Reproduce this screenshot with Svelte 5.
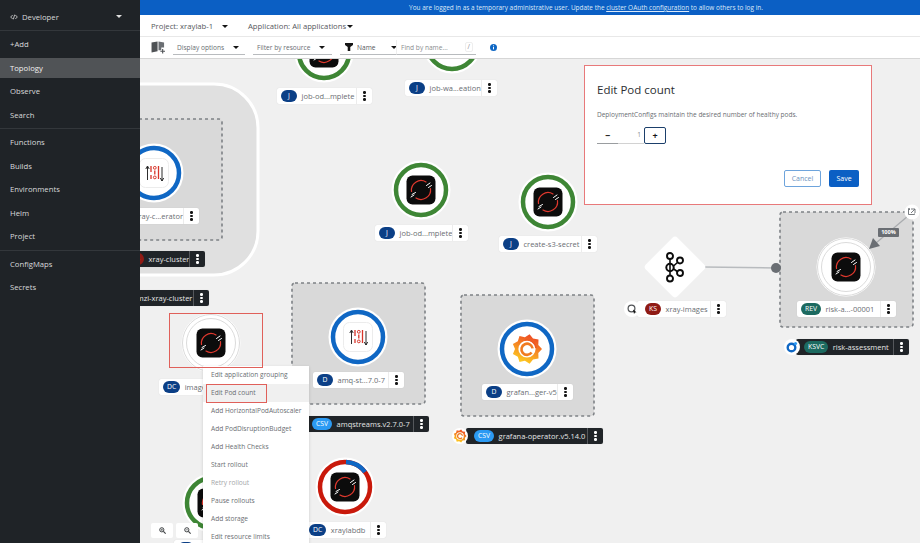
<script>
  const navTop = ['Observe', 'Search'];
  const navMid = ['Functions', 'Builds', 'Environments', 'Helm', 'Project'];
  const navEnd = ['ConfigMaps', 'Secrets'];

  const menu = [
    'Edit application grouping', 'Edit Pod count', 'Add HorizontalPodAutoscaler', 'Add PodDisruptionBudget',
    'Add Health Checks', 'Start rollout', 'Retry rollout', 'Pause rollouts', 'Add storage', 'Edit resource limits'
  ];

  const groups = [
    { x: 100, y: 119, w: 122, h: 121 },
    { x: 292, y: 283, w: 133, h: 121 },
    { x: 461, y: 295, w: 133, h: 121 },
    { x: 780, y: 212, w: 133, h: 115 }
  ];

  const GREEN = '#3e8635';
  const BLUE = '#0f67c4';

  const nodes = [
    { x: 324, y: 53, ring: GREEN, icon: 'rh' },
    { x: 452, y: 44, ring: GREEN, icon: 'grey' },
    { x: 421, y: 190, ring: GREEN, icon: 'rh' },
    { x: 548, y: 202, ring: GREEN, icon: 'rh' },
    { x: 154, y: 173, ring: BLUE, icon: 'strimzi' },
    { x: 211, y: 343, ring: '', icon: 'rh' },
    { x: 358, y: 337, ring: BLUE, icon: 'strimzi' },
    { x: 527, y: 349, ring: BLUE, icon: 'grafana' },
    { x: 212, y: 503, ring: GREEN, icon: 'rh' },
    { x: 345, y: 487, ring: '#c9190b', icon: 'rh', part: true },
    { x: 846, y: 267, ring: '', icon: 'rh' }
  ];

  const DARKBLUE = '#0b3f86';
  const labels = [
    { x: 277, y: 96, w: 95, badge: 'J', color: DARKBLUE, name: 'job-od...mplete' },
    { x: 405, y: 88, w: 92, badge: 'J', color: DARKBLUE, name: 'job-wa...eation' },
    { x: 375, y: 233, w: 93, badge: 'J', color: DARKBLUE, name: 'job-od...mplete' },
    { x: 499, y: 244, w: 98, badge: 'J', color: DARKBLUE, name: 'create-s3-secret' },
    { x: 110, y: 216, w: 89, badge: 'D', color: DARKBLUE, name: 'xray-c...erator' },
    { x: 120, y: 259, w: 85, badge: 'KS', color: '#8f1a14', name: 'xray-cluster', dark: true },
    { x: 97, y: 298, w: 112, badge: 'KS', color: '#8f1a14', name: 'strimzi-xray-cluster', dark: true },
    { x: 159, y: 387, w: 95, badge: 'DC', color: DARKBLUE, name: 'image' },
    { x: 174, y: 548, w: 90, badge: 'J', color: DARKBLUE, name: 'job' },
    { x: 313, y: 380, w: 91, badge: 'D', color: DARKBLUE, name: 'amq-st...7.0-7' },
    { x: 304, y: 424, w: 125, badge: 'CSV', color: '#2b9af3', name: 'amqstreams.v2.7.0-7', dark: true },
    { x: 482, y: 392, w: 91, badge: 'D', color: DARKBLUE, name: 'grafan...ger-v5' },
    { x: 466, y: 436, w: 137, badge: 'CSV', color: '#2b9af3', name: 'grafana-operator.v5.14.0', dark: true },
    { x: 305, y: 530, w: 81, badge: 'DC', color: DARKBLUE, name: 'xraylabdb' },
    { x: 637, y: 309, w: 89, badge: 'KS', color: '#8f1a14', name: 'xray-images', iconed: true },
    { x: 797, y: 309, w: 99, badge: 'REV', color: '#1c6a60', name: 'risk-a...-00001' },
    { x: 796, y: 347, w: 113, badge: 'KSVC', color: '#1c6a60', name: 'risk-assessment', dark: true }
  ];

  // page coordinates -> canvas coordinates
  const CANVAS_X = 140;
  const CANVAS_Y = 59;

  function gear() {
    const pts = [];
    for (let i = 0; i < 18; i++) {
      const a = (i / 18) * Math.PI * 2;
      const r = i % 2 ? 12 : 15;
      pts.push((Math.cos(a) * r).toFixed(1) + ',' + (Math.sin(a) * r).toFixed(1));
    }
    return pts.join(' ');
  }
  const gearPoints = gear();
</script>

<div class="page">
  <aside class="nav">
    <div class="perspective">
      <span class="perspective-name">
        <svg viewBox="0 0 12 8" width="8" height="6"><path d="M4 1 1 4l3 3M8 1l3 3-3 3M7 0.5 5 7.5" fill="none" stroke="#d2d2d2" stroke-width="1.3" /></svg>
        Developer
      </span>
      <span class="caret light"></span>
    </div>
    <div class="nav-section">
      <a class="nav-item" href="#add">+Add</a>
      <a class="nav-item active" href="#topology">Topology</a>
      {#each navTop as item}
        <a class="nav-item" href="#{item}">{item}</a>
      {/each}
    </div>
    <div class="nav-section">
      {#each navMid as item}
        <a class="nav-item" href="#{item}">{item}</a>
      {/each}
    </div>
    <div class="nav-section last">
      {#each navEnd as item}
        <a class="nav-item" href="#{item}">{item}</a>
      {/each}
    </div>
  </aside>

  <main class="main">
    <div class="banner">
      You are logged in as a temporary administrative user. Update the <u>cluster OAuth configuration</u> to allow others to log in.
    </div>

    <div class="project-bar">
      <span class="project">Project: xraylab-1<span class="caret"></span></span>
      <span class="application">Application: All applications<span class="caret tight"></span></span>
    </div>

    <div class="toolbar">
      <svg class="book" viewBox="0 0 16 14" width="15" height="13">
        <path d="M0.5 1.5 7 0.5V11L0.5 12.5Z" fill="#4f5255" />
        <path d="M8 0.5 14 1.5V7H11V10H8Z" fill="#6a6e73" />
        <path d="M12.5 8.5v5M10 11h5" stroke="#4f5255" stroke-width="1.2" />
      </svg>
      <div class="select display">Display options<span class="caret"></span></div>
      <div class="select resource">Filter by resource<span class="caret"></span></div>
      <div class="search-group">
        <div class="select name">
          <svg class="funnel" viewBox="0 0 10 10" width="8" height="8"><path d="M0 0h10v2.4L6.6 5v5H3.4V5L0 2.4Z" fill="#151515" /></svg>
          <span class="name-text">Name</span><span class="caret"></span>
        </div>
        <div class="find">Find by name...<span class="slash">/</span></div>
      </div>
      <svg class="info" viewBox="0 0 10 10" width="7" height="7">
        <circle cx="5" cy="5" r="5" fill="#0f67c4" />
        <path d="M5 4.3v3.4M5 2v1.3" stroke="#fff" stroke-width="1.4" />
      </svg>
    </div>

    <div class="canvas">
      <svg class="graph" viewBox="140 59 780 484" width="780" height="484">
        <defs>
          <linearGradient id="graf" x1="0.2" y1="1" x2="0.6" y2="0">
            <stop offset="0.1" stop-color="#fdc921" />
            <stop offset="0.95" stop-color="#ee4f24" />
          </linearGradient>
        </defs>

        <rect x="60" y="84" width="198" height="191" rx="44" fill="#e0e0e0" stroke="#fff" stroke-width="3" />

        {#each groups as g}
          <rect x={g.x} y={g.y} width={g.w} height={g.h} rx="3" fill="#d9d9d9" stroke="#7d8185" stroke-width="1.6" stroke-dasharray="3 3" />
        {/each}

        <line x1="704" y1="267" x2="776" y2="268" stroke="#b8bbbe" stroke-width="1.5" />
        <circle cx="776" cy="268" r="5" fill="#6a6e73" />
        <line x1="908" y1="216" x2="876" y2="243" stroke="#a9acaf" stroke-width="1.2" />
        <path d="M869 249 873 238 880 246Z" fill="#6a6e73" />

        <g transform="translate(675 267)">
          <rect x="-22.5" y="-22.5" width="45" height="45" rx="4" fill="#fff" transform="rotate(45)" />
          <g fill="none" stroke="#0c0c0c">
            <path d="M-5 -8V8M-2 -0.5 3 -5M-2 1.5 3 5" stroke-width="1.6" />
            <circle cx="-5" cy="-11" r="3" stroke-width="1.9" />
            <circle cx="-5" cy="0.5" r="3.7" stroke-width="2" />
            <circle cx="-5" cy="11.5" r="3" stroke-width="1.9" />
            <circle cx="5" cy="-6.5" r="3" stroke-width="1.9" />
            <circle cx="5" cy="6" r="3" stroke-width="1.9" />
          </g>
        </g>

        {#each nodes as n}
          <g transform="translate({n.x} {n.y})">
            <circle r="29.5" fill="#fff" />
            {#if n.part}
              <circle r="25" fill="none" stroke="#c9190b" stroke-width="4.5" />
              <path d="M1 -25 A25 25 0 0 1 20 -15" fill="none" stroke={BLUE} stroke-width="4.5" />
            {:else if n.ring}
              <circle r="25" fill="none" stroke={n.ring} stroke-width="4.5" />
            {:else}
              <circle r="28.5" fill="none" stroke="#d2d2d2" stroke-width="0.8" />
              <circle r="24.5" fill="none" stroke="#d2d2d2" stroke-width="0.8" />
            {/if}

            {#if n.icon === 'rh'}
              <rect x="-14.5" y="-14.5" width="29" height="29" rx="6" fill="#0c0c0c" />
              <g fill="none" stroke-linecap="round">
                <path d="M-9.5 1.5A9.6 9.6 0 0 1 5 -8M9.5 -1.5A9.6 9.6 0 0 1 -5 8" stroke="#e0392e" stroke-width="1.2" />
                <path d="M5.5 -4.5 9 -7M7.5 -2.5 10.5 -4.5M-9 4.5 -5.5 2.5M-10 7-7 5" stroke="#fff" stroke-width="1" />
              </g>
            {:else if n.icon === 'grey'}
              <rect x="-14.5" y="-14.5" width="29" height="29" rx="6" fill="#6a6e73" />
            {:else if n.icon === 'strimzi'}
              <rect x="-14.5" y="-14.5" width="29" height="29" rx="6" fill="#fff" stroke="#ececec" />
              <path d="M-6.5 -6V7M-8.2 -4 -6.5 -7 -4.8 -4" fill="none" stroke="#151515" stroke-width="0.9" />
              <path d="M8 -6V8M6.3 5 8 8 9.7 5" fill="none" stroke="#151515" stroke-width="0.9" />
              <g fill="none" stroke="#d8352a" stroke-width="1.3">
                <path d="M-3 -7V-1M-3 2V6M0.8 -2.5V1.5M4.5 -7V6" />
                <circle cx="0.8" cy="-5.2" r="1.4" stroke-width="1" />
                <circle cx="0.8" cy="4.4" r="1.4" stroke-width="1" />
              </g>
            {:else if n.icon === 'grafana'}
              <polygon points={gearPoints} fill="url(#graf)" />
              <circle r="8.6" fill="#fff" />
              <path d="M4.6 3.6A5.6 5.6 0 1 1 5.6 -0.6" fill="none" stroke="#f07a20" stroke-width="2.6" />
              <path d="M-2 -9A9 9 0 0 1 9 -1" fill="none" stroke="#ee5a24" stroke-width="1.6" />
            {/if}
          </g>
        {/each}

        <!-- hover badge on the knative revision -->
        <circle cx="912" cy="212" r="7.5" fill="#fff" />
        <path d="M909.5 210v-1.5h-1v6h6v-1M911 209h4v4M915 209l-4 4" fill="none" stroke="#6a6e73" stroke-width="0.9" />
      </svg>

      <span class="traffic">100%</span>

      {#each labels as l}
        <div class="label" class:dark={l.dark} class:iconed={l.iconed} style="left: {l.x - CANVAS_X}px; top: {l.y - CANVAS_Y - 8}px; width: {l.w}px">
          <span class="badge" style="background: {l.color}">{l.badge}</span>
          <span class="label-name">{l.name}</span>
          <span class="kebab"><i></i><i></i><i></i></span>
        </div>
      {/each}

      <span class="app-icon" style="left: 484px; top: 242px">
        <svg viewBox="0 0 16 16" width="16" height="16">
          <circle cx="7.5" cy="7.5" r="3.4" fill="none" stroke="#4f5255" stroke-width="1.2" />
          <path d="M9 8.5l1 4.5 1-1.5 1.5-.2Z" fill="#151515" />
        </svg>
      </span>
      <span class="app-icon" style="left: 644px; top: 280px">
        <svg viewBox="0 0 16 16" width="16" height="16">
          <circle cx="7.5" cy="8.5" r="3.8" fill="none" stroke="#0f67c4" stroke-width="2.4" />
          <circle cx="11.5" cy="4.5" r="1.6" fill="#2b9af3" />
        </svg>
      </span>
      <span class="app-icon" style="left: 312px; top: 369px">
        <svg viewBox="-16 -16 32 32" width="14" height="14">
          <polygon points={gearPoints} fill="url(#graf)" />
          <circle r="8.6" fill="#fff" />
          <path d="M4.6 3.6A5.6 5.6 0 1 1 5.6 -0.6" fill="none" stroke="#f07a20" stroke-width="3" />
        </svg>
      </span>

      <div class="zoom-controls">
        {#each [0, 1] as z}
          <span class="zoom-btn">
            <svg viewBox="0 0 10 10" width="7" height="7">
              <circle cx="4" cy="4" r="3" fill="none" stroke="#3c3f42" stroke-width="1.4" />
              <path d="M6.3 6.3 9.5 9.5" stroke="#3c3f42" stroke-width="1.6" />
              <path d={z ? 'M2.5 4h3' : 'M2.5 4h3M4 2.5v3'} stroke="#3c3f42" stroke-width="0.9" />
            </svg>
          </span>
        {/each}
      </div>

      <span class="mark node-mark"></span>

      <ul class="menu">
        {#each menu as item, i}
          <li class:selected={i === 1} class:disabled={i === 6}>{item}</li>
        {/each}
      </ul>
      <span class="mark menu-mark"></span>

      <section class="dialog">
        <h2>Edit Pod count</h2>
        <p>DeploymentConfigs maintain the desired number of healthy pods.</p>
        <div class="stepper">
          <button type="button" class="step">−</button>
          <span class="count">1</span>
          <button type="button" class="step plus">+</button>
        </div>
        <div class="actions">
          <button type="button" class="cancel">Cancel</button>
          <button type="button" class="save">Save</button>
        </div>
      </section>
    </div>
  </main>
</div>

<style>
  :global(body) {
    background: #fff;
    font-family: "Open Sans", "Noto Sans", sans-serif;
  }

  .page {
    display: flex;
    width: 920px;
    height: 543px;
    overflow: hidden;
    color: #3c3f42;
  }

  .nav {
    flex: none;
    width: 140px;
    background: #1f2327;
    color: #d9dadb;
    font-size: 7.7px;
  }
  .perspective {
    display: flex;
    align-items: center;
    justify-content: space-between;
    height: 31px;
    padding: 3px 18px 0 10px;
    box-sizing: border-box;
    border-bottom: 1px solid #33373b;
  }
  .perspective-name {
    display: flex;
    align-items: center;
    gap: 4px;
  }
  .nav-section {
    display: flex;
    flex-direction: column;
    padding: 1.5px 0;
    border-bottom: 1px solid #33373b;
  }
  .nav-section.last {
    border-bottom: none;
  }
  .nav-item {
    display: flex;
    align-items: center;
    height: 23.5px;
    padding-left: 10px;
    color: inherit;
    text-decoration: none;
  }
  .nav-item.active {
    height: 20px;
    margin: 2px 0 1.5px;
    background: #505356;
    color: #f0f0f0;
  }

  .main {
    flex: 1;
    min-width: 0;
    display: flex;
    flex-direction: column;
  }
  .banner {
    flex: none;
    height: 15px;
    padding-left: 112px;
    background: #0b5fc4;
    color: #dce9f8;
    font-size: 6.45px;
    line-height: 15px;
    text-align: center;
    white-space: nowrap;
  }
  .project-bar {
    flex: none;
    display: flex;
    align-items: center;
    height: 21px;
    padding-left: 11px;
    font-size: 7.7px;
    color: #55585c;
    border-bottom: 1px solid #e8e8e8;
  }
  .project {
    width: 97px;
  }
  .application {
    white-space: nowrap;
  }

  .caret {
    display: inline-block;
    width: 0;
    height: 0;
    margin-left: 9px;
    vertical-align: 1px;
    border-left: 3px solid transparent;
    border-right: 3px solid transparent;
    border-top: 3px solid #151515;
  }
  .caret.tight {
    margin-left: 1px;
  }
  .caret.light {
    border-top-color: #e0e0e0;
  }

  .toolbar {
    flex: none;
    display: flex;
    align-items: center;
    height: 22px;
    padding-left: 11px;
    box-sizing: border-box;
    background: #fff;
    border-bottom: 1px solid #d6d6d6;
    font-size: 6.6px;
    color: #6a6e73;
  }
  .book {
    margin-right: 7px;
  }
  .select {
    display: flex;
    align-items: center;
    justify-content: space-between;
    box-sizing: border-box;
    height: 15px;
    padding: 0 7px 0 4px;
    border-bottom: 1px solid #b8bbbe;
    white-space: nowrap;
  }
  .display {
    width: 72px;
    margin-right: 8px;
  }
  .resource {
    width: 79px;
    margin-right: 8px;
  }
  .search-group {
    display: flex;
  }
  .name {
    width: 56px;
    padding-left: 5px;
    justify-content: flex-start;
    gap: 4px;
    color: #55585c;
  }
  .funnel {
    flex: none;
  }
  .name-text {
    margin-right: 3px;
  }
  .find {
    display: flex;
    align-items: center;
    justify-content: space-between;
    box-sizing: border-box;
    width: 80px;
    height: 15px;
    padding: 0 3px 0 4px;
    border-bottom: 1px solid #b8bbbe;
    border-left: 1px solid #eee;
    color: #8a8d90;
  }
  .slash {
    padding: 0 2px;
    border: 1px solid #eee;
    border-radius: 2px;
    line-height: 8px;
  }
  .info {
    margin-left: 14px;
  }

  .canvas {
    position: relative;
    flex: 1;
    min-height: 0;
    overflow: hidden;
    background: #f0f0f0;
  }
  .graph {
    position: absolute;
    left: 0;
    top: 0;
    display: block;
  }

  .label {
    position: absolute;
    display: flex;
    align-items: center;
    box-sizing: border-box;
    height: 16px;
    padding-left: 4px;
    background: #fff;
    border-radius: 2px;
    box-shadow: 0 0 1px rgba(0, 0, 0, 0.15);
    font-size: 7.5px;
    color: #6a6e73;
    white-space: nowrap;
  }
  .label.dark {
    padding-left: 8px;
    background: #202428;
    color: #e4e5e6;
  }
  .label.iconed {
    padding-left: 8px;
  }
  .badge {
    flex: none;
    min-width: 16px;
    height: 12px;
    padding: 0 4px;
    box-sizing: border-box;
    border-radius: 6px;
    color: #fff;
    font-size: 6.8px;
    line-height: 12px;
    text-align: center;
  }
  .label-name {
    flex: 1;
    min-width: 0;
    padding-left: 4.5px;
    overflow: hidden;
  }
  .kebab {
    flex: none;
    display: flex;
    flex-direction: column;
    align-items: center;
    justify-content: center;
    gap: 1px;
    width: 15px;
    height: 16px;
    border-left: 1px solid #ececec;
  }
  .dark .kebab {
    border-left-color: #55585c;
  }
  .kebab i {
    width: 2.4px;
    height: 2.4px;
    border-radius: 50%;
    background: #151515;
  }
  .dark .kebab i {
    background: #fff;
  }

  .app-icon {
    position: absolute;
    display: flex;
    width: 16px;
    height: 16px;
    align-items: center;
    justify-content: center;
    background: #fff;
    border-radius: 50%;
    z-index: 1;
  }

  .traffic {
    position: absolute;
    left: 738px;
    top: 169px;
    width: 21px;
    height: 9px;
    background: #6a6e73;
    border-radius: 1px;
    color: #fff;
    font-size: 5.6px;
    font-weight: 700;
    line-height: 9px;
    text-align: center;
  }

  .zoom-controls {
    position: absolute;
    left: 11px;
    top: 464px;
    display: flex;
    gap: 3px;
  }
  .zoom-btn {
    display: flex;
    align-items: center;
    justify-content: center;
    width: 22px;
    height: 15px;
    background: #fff;
    border-radius: 2px;
  }

  .mark {
    position: absolute;
    box-sizing: border-box;
    border: 1px solid #e0605a;
    z-index: 3;
  }
  .node-mark {
    left: 29px;
    top: 254px;
    width: 94px;
    height: 55px;
  }
  .menu-mark {
    left: 66px;
    top: 325px;
    width: 61px;
    height: 19px;
  }

  .menu {
    position: absolute;
    left: 63px;
    top: 307px;
    width: 106px;
    height: 180px;
    margin: 0;
    padding: 0;
    list-style: none;
    background: #fff;
    box-shadow: 0 1px 3px rgba(0, 0, 0, 0.15);
    font-size: 6.6px;
    color: #6a6e73;
    z-index: 2;
  }
  .menu li {
    height: 18px;
    padding-left: 8px;
    line-height: 18px;
    white-space: nowrap;
  }
  .menu li.selected {
    background: #f0f0f0;
  }
  .menu li.disabled {
    color: #a3a5a8;
  }

  .dialog {
    position: absolute;
    left: 444px;
    top: 6px;
    box-sizing: border-box;
    width: 288px;
    height: 140px;
    padding: 16px 13px 0 12px;
    background: #fff;
    border: 1px solid #e8797a;
    z-index: 4;
  }
  .dialog h2 {
    margin: 0;
    font-size: 11.5px;
    font-weight: 400;
    line-height: 16px;
    color: #2b2e31;
  }
  .dialog p {
    margin: 12px 0 0;
    font-size: 6.5px;
    line-height: 10px;
    color: #6a6e73;
  }
  .stepper {
    display: flex;
    align-items: stretch;
    height: 17px;
    margin-top: 7px;
  }
  .step {
    box-sizing: border-box;
    width: 21px;
    padding: 0;
    background: #fff;
    border: none;
    border-bottom: 1px solid #9a9da0;
    font: 700 9px "Open Sans", sans-serif;
    color: #151515;
  }
  .plus {
    width: 22px;
    border: 1.5px solid #1b3f6b;
    border-radius: 2px;
  }
  .count {
    width: 26px;
    padding-right: 3px;
    box-sizing: border-box;
    border-bottom: 1px solid #d2d2d2;
    font-size: 6.6px;
    line-height: 15px;
    text-align: right;
    color: #8a8d90;
  }
  .actions {
    position: absolute;
    right: 12px;
    bottom: 17px;
    display: flex;
    gap: 8px;
  }
  .actions button {
    box-sizing: border-box;
    height: 17px;
    padding: 0;
    border-radius: 2px;
    font: 400 7px "Open Sans", sans-serif;
  }
  .cancel {
    width: 37px;
    background: #fff;
    border: 1px solid #6ea4dc;
    color: #6d94c0;
  }
  .save {
    width: 30px;
    background: #0b5fc4;
    border: none;
    color: #fff;
  }
</style>
